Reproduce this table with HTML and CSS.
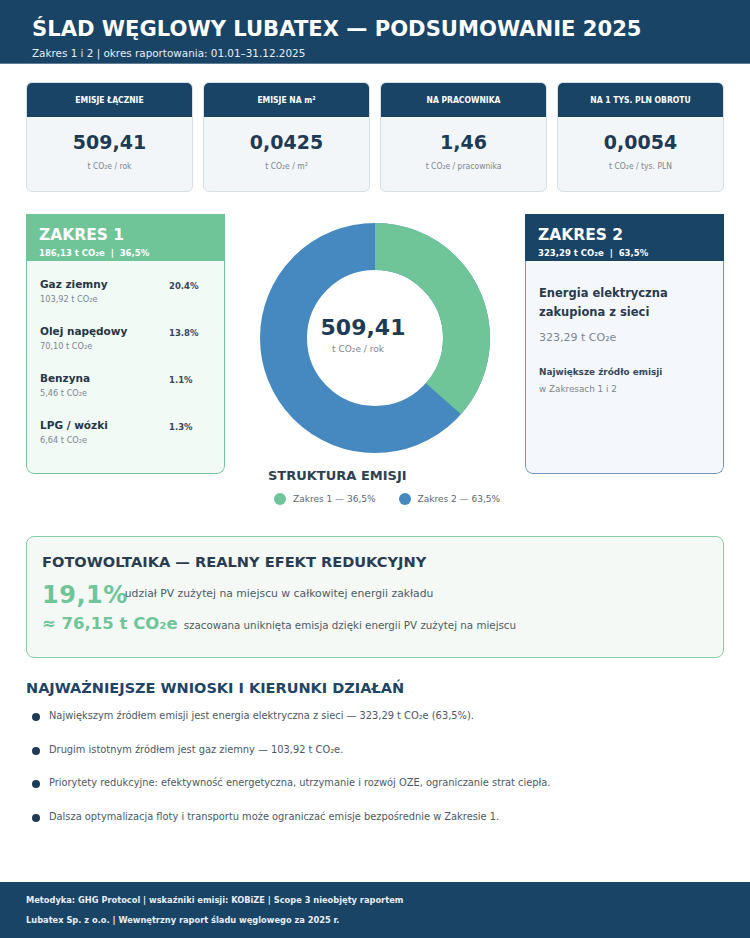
FILE: index.html
```html
<!DOCTYPE html>
<html lang="pl">
<head>
<meta charset="utf-8">
<title>Ślad węglowy Lubatex — podsumowanie 2025</title>
<link rel="stylesheet" href="styles.css">
</head>
<body>
<header class="top">
  <h1 class="top-title">ŚLAD WĘGLOWY LUBATEX — PODSUMOWANIE 2025</h1>
  <div class="top-sub">Zakres 1 i 2 | okres raportowania: 01.01–31.12.2025</div>
</header>

<main class="page">
  <section class="kpis">
    <div class="kpi">
      <div class="kpi-head">EMISJE ŁĄCZNIE</div>
      <div class="kpi-body"><div class="kpi-val">509,41</div><div class="kpi-unit">t CO₂e / rok</div></div>
    </div>
    <div class="kpi">
      <div class="kpi-head">EMISJE NA m²</div>
      <div class="kpi-body"><div class="kpi-val">0,0425</div><div class="kpi-unit">t CO₂e / m²</div></div>
    </div>
    <div class="kpi">
      <div class="kpi-head">NA PRACOWNIKA</div>
      <div class="kpi-body"><div class="kpi-val">1,46</div><div class="kpi-unit">t CO₂e / pracownika</div></div>
    </div>
    <div class="kpi">
      <div class="kpi-head">NA 1 TYS. PLN OBROTU</div>
      <div class="kpi-body"><div class="kpi-val">0,0054</div><div class="kpi-unit">t CO₂e / tys. PLN</div></div>
    </div>
  </section>

  <section class="scopes">
    <div class="scope scope-1">
      <div class="scope-head">
        <div class="scope-title">ZAKRES 1</div>
        <div class="scope-sub">186,13 t CO₂e &nbsp;|&nbsp; 36,5%</div>
      </div>
      <div class="scope-body">
        <div class="src"><div><div class="src-name">Gaz ziemny</div><div class="src-val">103,92 t CO₂e</div></div><div class="src-pct">20.4%</div></div>
        <div class="src"><div><div class="src-name">Olej napędowy</div><div class="src-val">70,10 t CO₂e</div></div><div class="src-pct">13.8%</div></div>
        <div class="src"><div><div class="src-name">Benzyna</div><div class="src-val">5,46 t CO₂e</div></div><div class="src-pct">1.1%</div></div>
        <div class="src"><div><div class="src-name">LPG / wózki</div><div class="src-val">6,64 t CO₂e</div></div><div class="src-pct">1.3%</div></div>
      </div>
    </div>

    <div class="chart">
      <div class="donut">
        <svg class="donut-svg" viewBox="0 0 232 232" width="232" height="232">
          <circle cx="116" cy="116" r="91.5" fill="none" stroke="#4589c0" stroke-width="47"/>
          <circle cx="116" cy="116" r="91.5" fill="none" stroke="#6fc598" stroke-width="47" stroke-dasharray="209.85 574.9" transform="rotate(-90 116 116)"/>
        </svg>
        <div class="donut-center">
          <div class="donut-val">509,41</div>
          <div class="donut-unit">t CO₂e / rok</div>
        </div>
      </div>
      <div class="chart-title">STRUKTURA EMISJI</div>
      <div class="legend">
        <span class="leg"><span class="dot dot-green"></span>Zakres 1 — 36,5%</span>
        <span class="leg"><span class="dot dot-blue"></span>Zakres 2 — 63,5%</span>
      </div>
    </div>

    <div class="scope scope-2">
      <div class="scope-head">
        <div class="scope-title">ZAKRES 2</div>
        <div class="scope-sub">323,29 t CO₂e &nbsp;|&nbsp; 63,5%</div>
      </div>
      <div class="scope-body body-2">
        <div class="s2-name">Energia elektryczna zakupiona z sieci</div>
        <div class="s2-val">323,29 t CO₂e</div>
        <div class="s2-note">Największe źródło emisji</div>
        <div class="s2-small">w Zakresach 1 i 2</div>
      </div>
    </div>
  </section>

  <section class="pv">
    <h2 class="pv-title">FOTOWOLTAIKA — REALNY EFEKT REDUKCYJNY</h2>
    <div class="pv-row"><span class="pv-big">19,1%</span><span class="pv-txt pv-txt1">udział PV zużytej na miejscu w całkowitej energii zakładu</span></div>
    <div class="pv-row pv-row2"><span class="pv-mid">≈ 76,15 t CO₂e</span><span class="pv-txt">szacowana uniknięta emisja dzięki energii PV zużytej na miejscu</span></div>
  </section>

  <section class="concl">
    <h2 class="concl-title">NAJWAŻNIEJSZE WNIOSKI I KIERUNKI DZIAŁAŃ</h2>
    <ul class="concl-list">
      <li>Największym źródłem emisji jest energia elektryczna z sieci — 323,29 t CO₂e (63,5%).</li>
      <li>Drugim istotnym źródłem jest gaz ziemny — 103,92 t CO₂e.</li>
      <li>Priorytety redukcyjne: efektywność energetyczna, utrzymanie i rozwój OZE, ograniczanie strat ciepła.</li>
      <li>Dalsza optymalizacja floty i transportu może ograniczać emisje bezpośrednie w Zakresie 1.</li>
    </ul>
  </section>
</main>

<footer class="foot">
  <div class="foot-line">Metodyka: GHG Protocol | wskaźniki emisji: KOBiZE | Scope 3 nieobjęty raportem</div>
  <div class="foot-line">Lubatex Sp. z o.o. | Wewnętrzny raport śladu węglowego za 2025 r.</div>
</footer>
</body>
</html>
```

FILE: styles.css
```css
* { box-sizing: border-box; }
html, body { margin: 0; padding: 0; }
body {
  width: 750px;
  height: 938px;
  position: relative;
  font-family: "DejaVu Sans", "Noto Sans", sans-serif;
  color: #1f3a52;
  background: #ffffff;
}
h1, h2 { margin: 0; }

.top {
  background: #1a4466;
  height: 64px;
  padding: 15px 32px 0;
  border-bottom: 1px solid #5f7d96;
}
.top-title {
  color: #ffffff;
  font-size: 21.1px;
  font-weight: bold;
  line-height: 28px;
}
.top-sub {
  color: #e6edf3;
  font-size: 10.4px;
  line-height: 14px;
  margin-top: 3px;
}

.page { padding: 0 26px; }

.kpis {
  display: grid;
  grid-template-columns: repeat(4, 1fr);
  gap: 10px;
  margin-top: 18px;
}
.kpi {
  border: 1px solid #d6e0e7;
  border-radius: 6px;
  overflow: hidden;
  background: #f3f6f8;
  height: 110px;
}
.kpi-head {
  background: #1a4466;
  color: #ffffff;
  font-family: "DejaVu Sans Condensed", "DejaVu Sans", sans-serif;
  font-weight: bold;
  font-size: 8.5px;
  height: 34px;
  line-height: 34px;
  text-align: center;
}
.kpi-body { text-align: center; padding-top: 13px; }
.kpi-val {
  font-size: 19px;
  font-weight: bold;
  color: #1e3a55;
  line-height: 24px;
}
.kpi-unit {
  font-family: "DejaVu Sans Condensed", "DejaVu Sans", sans-serif;
  font-size: 8.5px;
  color: #7a8590;
  margin-top: 7px;
}

.scopes {
  display: grid;
  grid-template-columns: 199px 1fr 199px;
  margin-top: 22px;
  height: 300px;
}
.scope {
  height: 260px;
  border-radius: 0 0 8px 8px;
  overflow: hidden;
  display: flex;
  flex-direction: column;
}
.scope-head {
  height: 47px;
  padding: 11px 13px 0;
  color: #ffffff;
}
.scope-title { font-size: 15.5px; font-weight: bold; line-height: 20px; }
.scope-sub { font-size: 8.5px; font-weight: bold; line-height: 12px; margin-top: 2px; }
.scope-body { flex: 1; border-radius: 0 0 8px 8px; }

.scope-1 .scope-head { background: #6fc598; }
.scope-1 .scope-body {
  background: #f2faf6;
  border: 1.5px solid #6fc598;
  border-top: none;
  padding: 16px 13px 0;
}
.src {
  display: grid;
  grid-template-columns: 129px auto;
  align-items: start;
  height: 47px;
}
.src-name { font-size: 10.5px; font-weight: bold; color: #253545; line-height: 14px; }
.src-val { font-size: 8.2px; color: #7a8590; margin-top: 3px; }
.src-pct { font-size: 8.5px; font-weight: bold; color: #35475a; margin-top: 4px; }

.scope-2 .scope-head { background: #1a4466; }
.scope-2 .scope-body {
  background: #f4f8fc;
  border: 1.5px solid #6e96bf;
  border-top: none;
  padding: 23px 13px 0;
}
.s2-name { font-size: 11.5px; font-weight: bold; color: #2a3a4c; line-height: 19px; }
.s2-val { font-size: 11px; color: #7a8590; margin-top: 9px; }
.s2-note { font-size: 8.9px; font-weight: bold; color: #35475a; margin-top: 23px; }
.s2-small { font-size: 8.8px; color: #7a8590; margin-top: 7px; }

.chart { display: flex; flex-direction: column; align-items: center; }
.donut { position: relative; width: 232px; height: 232px; margin-top: 8px; }
.donut-svg { display: block; }
.donut-center {
  position: absolute;
  inset: 0;
  display: flex;
  flex-direction: column;
  align-items: center;
  justify-content: center;
  padding-bottom: 8px;
  padding-right: 24px;
}
.donut-val { font-size: 22px; font-weight: bold; color: #1e3a55; line-height: 26px; }
.donut-unit { font-size: 9px; color: #7a8590; margin-top: 3px; margin-right: 10px; }
.chart-title {
  font-size: 13px;
  font-weight: bold;
  color: #2f3f50;
  margin-top: 14px;
  align-self: flex-start;
  margin-left: 43px;
}
.legend {
  display: flex;
  gap: 23px;
  font-size: 9px;
  color: #5b6670;
  margin-top: 10px;
  align-self: flex-start;
  margin-left: 49px;
}
.leg { display: inline-flex; align-items: center; gap: 7px; }
.dot { width: 12px; height: 12px; border-radius: 50%; display: inline-block; }
.dot-green { background: #6fc598; }
.dot-blue { background: #4589c0; }

.pv {
  margin-top: 22px;
  border: 1.5px solid #86cda6;
  border-radius: 8px;
  background: #f4f9f6;
  height: 122px;
  padding: 15px 15px 0;
}
.pv-title { font-size: 14.6px; font-weight: bold; color: #2a3d50; line-height: 20px; }
.pv-row { display: flex; align-items: baseline; margin-top: 8px; }
.pv-row2 { margin-top: 2px; }
.pv-big { font-size: 24px; font-weight: bold; color: #6fc598; line-height: 30px; letter-spacing: 0.5px; }
.pv-mid { font-size: 16.5px; font-weight: bold; color: #6fc598; margin-right: 6px; line-height: 24px; }
.pv-txt {
  font-size: 10.3px;
  color: #4d5a66;
}
.pv-txt1 { margin-left: -3px; position: relative; top: -6px; font-size: 10.8px; }

.concl { margin-top: 20px; }
.concl-title { font-size: 14.5px; font-weight: bold; color: #1e4466; line-height: 20px; }
.concl-list { list-style: none; margin: 11px 0 0; padding: 0; }
.concl-list li {
  position: relative;
  font-size: 9.85px;
  color: #4c5864;
  line-height: 14px;
  padding-left: 23px;
  margin-bottom: 19.5px;
}
.concl-list li::before {
  content: "";
  position: absolute;
  left: 6px;
  top: 4px;
  width: 8px;
  height: 8px;
  border-radius: 50%;
  background: #1e3a55;
}

.foot {
  position: absolute;
  left: 0;
  right: 0;
  bottom: 0;
  height: 56px;
  background: #1a4466;
  padding: 8px 26px 0;
}
.foot-line {
  color: #e8eef4;
  font-family: "DejaVu Sans Condensed", "DejaVu Sans", sans-serif;
  font-weight: 600;
  font-size: 9.2px;
  line-height: 20px;
}
```
